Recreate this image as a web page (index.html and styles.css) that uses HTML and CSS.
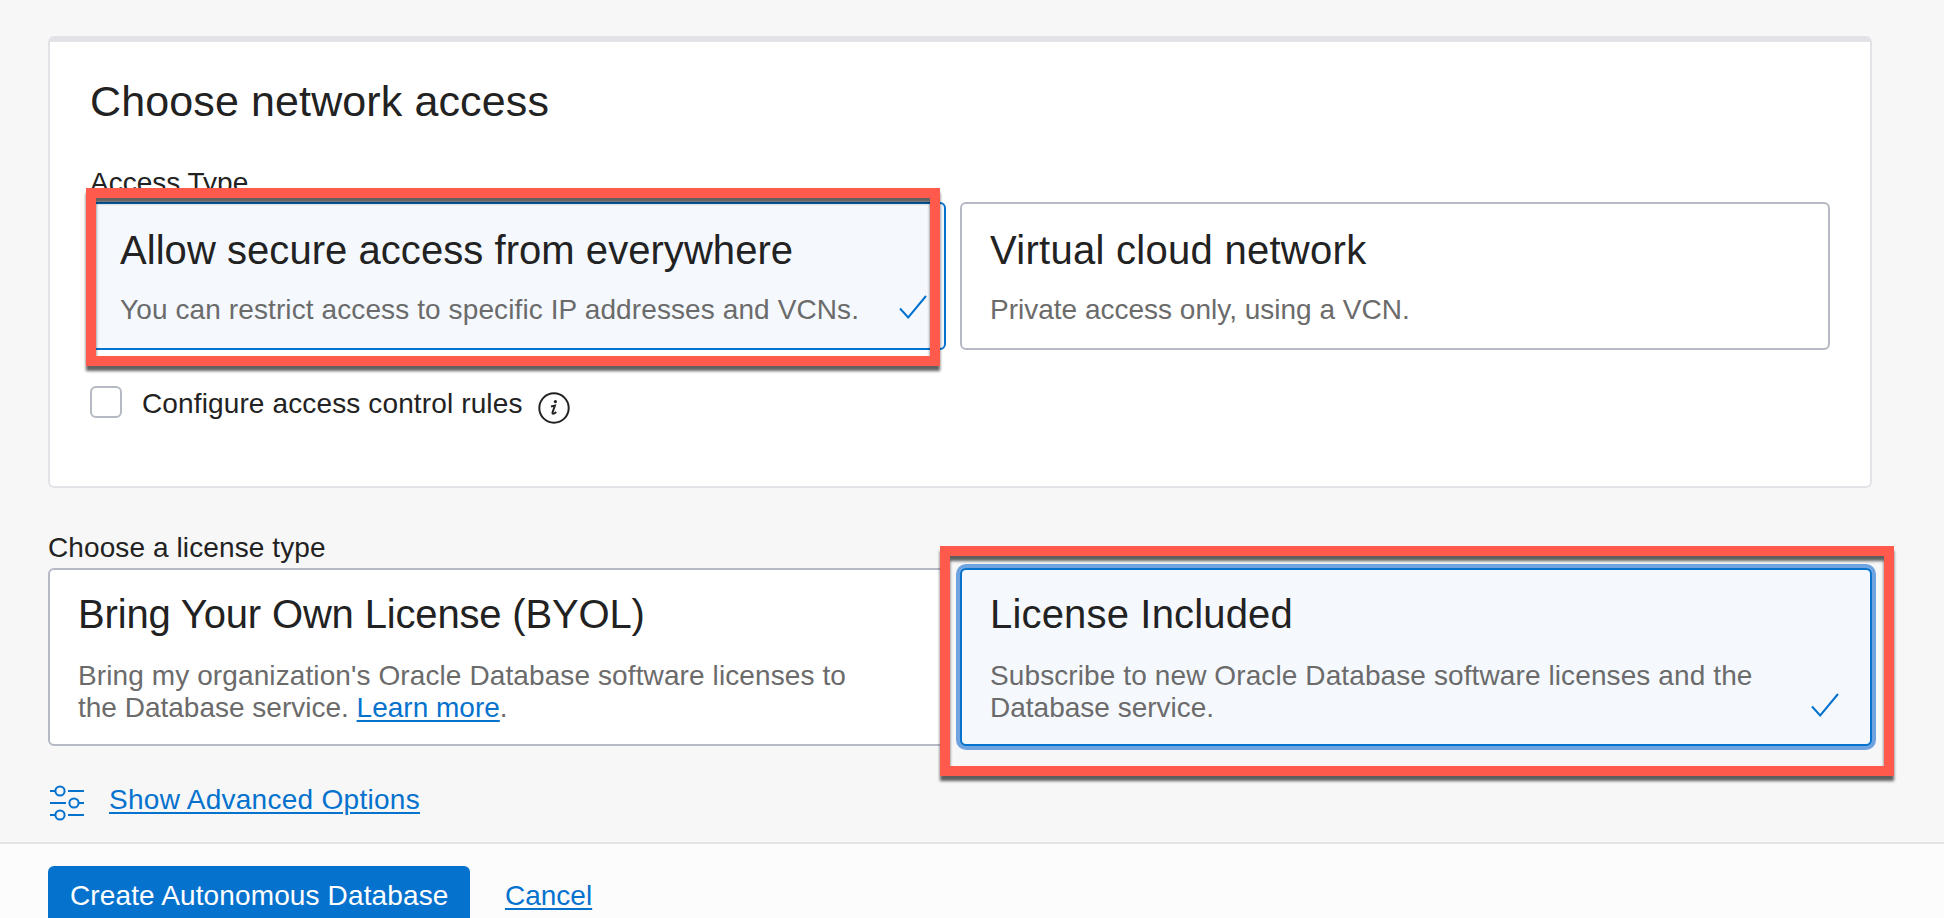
FILE: index.html
```html
<!DOCTYPE html>
<html lang="en">
<head>
<meta charset="utf-8">
<title>Create Autonomous Database</title>
<link rel="stylesheet" href="styles.css">
</head>
<body>
<div class="page">
<main class="form">
  <section class="panel">
    <h2 class="panel-title">Choose network access</h2>
    <div class="label access-label">Access Type</div>
    <div class="cards">
      <div class="card selected">
        <h3 class="card-title t-allow">Allow secure access from everywhere</h3>
        <p class="card-text">You can restrict access to specific IP addresses and VCNs.</p>
        <svg class="check check-near" viewBox="0 0 28 24"><path d="M1 13.5 9.2 22.5 27 1"/></svg>
      </div>
      <div class="card">
        <h3 class="card-title t-virtual">Virtual cloud network</h3>
        <p class="card-text t-plain">Private access only, using a VCN.</p>
      </div>
      <div class="callout callout-access"></div>
    </div>
    <div class="check-row">
      <span class="checkbox"></span>
      <span class="check-label">Configure access control rules</span>
      <svg class="info" viewBox="0 0 32 32"><circle cx="16" cy="16" r="14.7"/><circle class="dot" cx="17.4" cy="9.6" r="1.6"/><path d="M13 14.4 16.9 13.6 14.6 20.3C14.1 22.2 15.4 22.5 18.2 20"/></svg>
    </div>
  </section>

  <div class="label license-label">Choose a license type</div>
  <div class="cards">
    <div class="card tall">
      <h3 class="card-title t-byol">Bring Your Own License (BYOL)</h3>
      <p class="card-text">Bring my organization's Oracle Database software licenses to<br><span class="t-plain">the Database service. <a class="link">Learn more</a>.</span></p>
    </div>
    <div class="card tall selected focused">
      <h3 class="card-title t-included">License Included</h3>
      <p class="card-text">Subscribe to new Oracle Database software licenses and the<br><span class="t-plain">Database service.</span></p>
      <svg class="check" viewBox="0 0 28 24"><path d="M1 13.5 9.2 22.5 27 1"/></svg>
    </div>
    <div class="callout callout-license"></div>
  </div>

  <div class="advanced">
    <svg class="sliders" viewBox="0 0 36 36"><path d="M1 6h5M19 6h16M1 18h16M30 18h5M1 30h5M19 30h16"/><circle cx="11" cy="6" r="4.6"/><circle cx="25" cy="18" r="4.6"/><circle cx="11" cy="30" r="4.6"/></svg>
    <a class="link advanced-link">Show Advanced Options</a>
  </div>
</main>
<footer class="footer">
  <div class="button">Create Autonomous Database</div>
  <a class="link cancel">Cancel</a>
</footer>
</div>
</body>
</html>
```
FILE: styles.css
```css
* { box-sizing: border-box; }
body { margin: 0; background: #f7f7f7; color: #222; font: 28px/32px "Liberation Sans", Arial, sans-serif; }
.page { height: 918px; overflow: hidden; }
h2, h3, p { margin: 0; font-weight: 400; }
.form { padding: 36px 72px 27px 48px; }
.panel { height: 452px; padding: 34px 40px 0; background: #fff; border: 2px solid #e1e3e7; border-top-width: 6px; border-radius: 6px; }
.panel-title { font-size: 43px; line-height: 50px; letter-spacing: .12px; }
.label { margin-bottom: 4px; white-space: nowrap; }
.access-label { margin-top: 41px; margin-bottom: 3px; }
.license-label { margin-top: 44px; letter-spacing: .1px; }
.cards { position: relative; display: grid; grid-template-columns: 1fr 1fr; }
.card { position: relative; height: 148px; padding: 22px 28px; background: #fff; border: 2px solid #b4b9c3; border-radius: 6px; white-space: nowrap; }
.card:first-child { margin-right: 14px; }
.card-title { font-size: 40px; line-height: 48px; }
.t-allow { letter-spacing: .05px; }
.t-virtual { letter-spacing: .28px; }
.t-byol { letter-spacing: -.16px; }
.t-included { letter-spacing: .17px; }
.card-text { margin-top: 20px; color: #6b6b6b; letter-spacing: .105px; }
.t-plain { letter-spacing: 0; }
.card.tall { height: 178px; padding-top: 20px; }
.tall .card-text { margin-top: 22px; }
.card.selected { background: #f5f9fe; border-color: #0572ce; }
.card.focused { box-shadow: 0 0 0 4px #70a4e1; }
.check { position: absolute; right: 31px; bottom: 27px; width: 28px; height: 24px; fill: none; stroke: #0572ce; stroke-width: 2; }
.check-near { right: 17px; bottom: 29px; }
.callout { position: absolute; border: 10px solid #ff5a4c; filter: drop-shadow(0 5px 1.5px rgba(0, 0, 0, .62)); }
.callout-access { left: -4px; top: -14px; width: 854px; height: 178px; }
.callout-license { left: 892px; top: -22px; width: 954px; height: 230px; }
.check-row { display: flex; align-items: flex-start; margin-top: 36px; white-space: nowrap; }
.checkbox { width: 32px; height: 32px; border: 2px solid #b4b9c3; border-radius: 6px; }
.check-label { width: 380px; margin: 2px 16px 0 20px; letter-spacing: .13px; }
.info { width: 32px; height: 32px; margin-top: 6px; fill: none; stroke: #222; stroke-width: 2; }
.info .dot { fill: #222; stroke: none; }
.link { color: #0572ce; text-decoration: underline; text-decoration-thickness: 2px; text-underline-offset: 3px; }
.advanced { display: flex; gap: 24px; margin-top: 37px; white-space: nowrap; }
.advanced-link { margin: 1px 0 -1px; letter-spacing: .28px; }
.sliders { width: 36px; height: 36px; margin: 2px 0 -6px 1px; fill: none; stroke: #0572ce; stroke-width: 2; }
.footer { display: flex; height: 76px; padding: 22px 48px 0; background: #fcfcfc; border-top: 2px solid #e5e5e5; white-space: nowrap; }
.button { width: 422px; height: 60px; padding: 14px 22px; background: #0572ce; border-radius: 6px; color: #fff; letter-spacing: .13px; }
.cancel { margin: 14px 0 0 35px; }
```
